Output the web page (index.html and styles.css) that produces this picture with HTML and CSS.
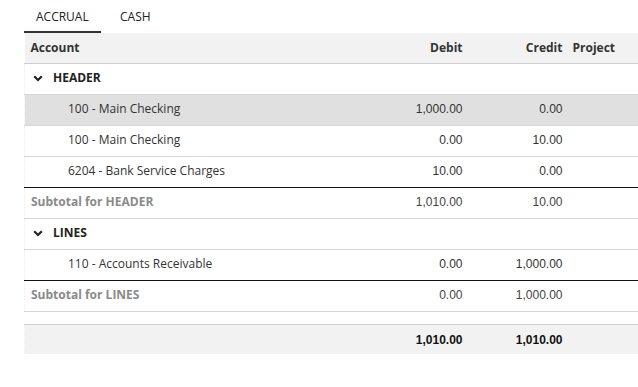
FILE: index.html
```html
<!DOCTYPE html>
<html>
<head>
<meta charset="utf-8">
<link rel="stylesheet" href="styles.css">
</head>
<body>
<div class="wrap">
  <div class="tabs">
    <div class="tab active">ACCRUAL</div>
    <div class="tab">CASH</div>
  </div>
  <table class="grid">
    <colgroup>
      <col class="c-acc"><col class="c-num"><col class="c-num"><col class="c-proj">
    </colgroup>
    <thead>
      <tr class="head">
        <th class="acc">Account</th><th class="num">Debit</th><th class="num">Credit</th><th class="proj">Project</th>
      </tr>
    </thead>
    <tbody>
      <tr class="group">
        <td class="acc"><div class="gl"><svg class="chev" width="10" height="7" viewBox="0 0 10 7"><path d="M1.2 1.2 L5 5 L8.8 1.2" fill="none" stroke="#222" stroke-width="2.2"/></svg><span>HEADER</span></div></td><td></td><td></td><td></td>
      </tr>
      <tr class="line sel">
        <td class="acc child">100 - Main Checking</td><td class="num">1,000.00</td><td class="num">0.00</td><td></td>
      </tr>
      <tr class="line">
        <td class="acc child">100 - Main Checking</td><td class="num">0.00</td><td class="num">10.00</td><td></td>
      </tr>
      <tr class="line last">
        <td class="acc child">6204 - Bank Service Charges</td><td class="num">10.00</td><td class="num">0.00</td><td></td>
      </tr>
      <tr class="sub">
        <td class="acc">Subtotal for HEADER</td><td class="num">1,010.00</td><td class="num">10.00</td><td></td>
      </tr>
      <tr class="group">
        <td class="acc"><div class="gl"><svg class="chev" width="10" height="7" viewBox="0 0 10 7"><path d="M1.2 1.2 L5 5 L8.8 1.2" fill="none" stroke="#222" stroke-width="2.2"/></svg><span>LINES</span></div></td><td></td><td></td><td></td>
      </tr>
      <tr class="line last">
        <td class="acc child">110 - Accounts Receivable</td><td class="num">0.00</td><td class="num">1,000.00</td><td></td>
      </tr>
      <tr class="sub">
        <td class="acc">Subtotal for LINES</td><td class="num">0.00</td><td class="num">1,000.00</td><td></td>
      </tr>
      <tr class="spacer"><td></td><td></td><td></td><td></td></tr>
      <tr class="total">
        <td class="acc"></td><td class="num">1,010.00</td><td class="num">1,010.00</td><td></td>
      </tr>
    </tbody>
  </table>
</div>
</body>
</html>
```
FILE: styles.css
```css
html, body { margin: 0; padding: 0; background: #fff; }
body { font-family: "Open Sans", "Liberation Sans", sans-serif; font-size: 12px; color: #333; }
.wrap { margin-left: 24px; }
.tabs { display: flex; height: 33px; box-sizing: border-box; }
.tab { height: 33px; box-sizing: border-box; padding: 9px 12px 0 12px; font-size: 12px; color: #222; line-height: 16px; }
.tab.active { width: 77px; border-bottom: 2px solid #333; }
.tab + .tab { padding-left: 19px; }
.grid { border-collapse: collapse; width: 614px; table-layout: fixed; }
.c-acc { width: 344px; }
.c-num { width: 100px; }
.c-proj { width: 70px; }
th, td { padding: 0 6px; height: 30px; box-sizing: border-box; white-space: nowrap; border-bottom: 1px solid #d6d6d6; line-height: 16px; }
.head th { background: #f2f2f2; font-weight: 700; color: #333; text-align: left; font-size: 12px; height: 30px; border-bottom: 1px solid #cfcfcf; }
.head th.num { text-align: right; }
.head th.proj { padding-left: 4px; }
td.num { text-align: right; font-family: "Liberation Sans", Arial, sans-serif; color: #444; }
.group td { font-weight: 700; color: #222; height: 31px; padding-bottom: 1px; }
.gl { display: flex; align-items: center; }
.chev { width: 10px; height: 7px; margin: 1px 10px 0 2px; }
.line td { height: 31px; color: #333; padding-bottom: 2px; }
.line .child { padding-left: 43px; }
.sel td { background: #e0e0e0; }
.line.last td { border-bottom: 1px solid #111; }
.sub td { height: 31px; padding-bottom: 1px; }
.sub td.acc { color: #8a8a8a; font-weight: 700; }
.spacer td { height: 13px; border-bottom: 1px solid #cfcfcf; }
.total td { background: #f2f2f2; height: 30px; border-bottom: none; padding-top: 1px; }
.total td.num { font-weight: 700; color: #111; }
td.acc { border-left: 1px dotted #eee; }
```
